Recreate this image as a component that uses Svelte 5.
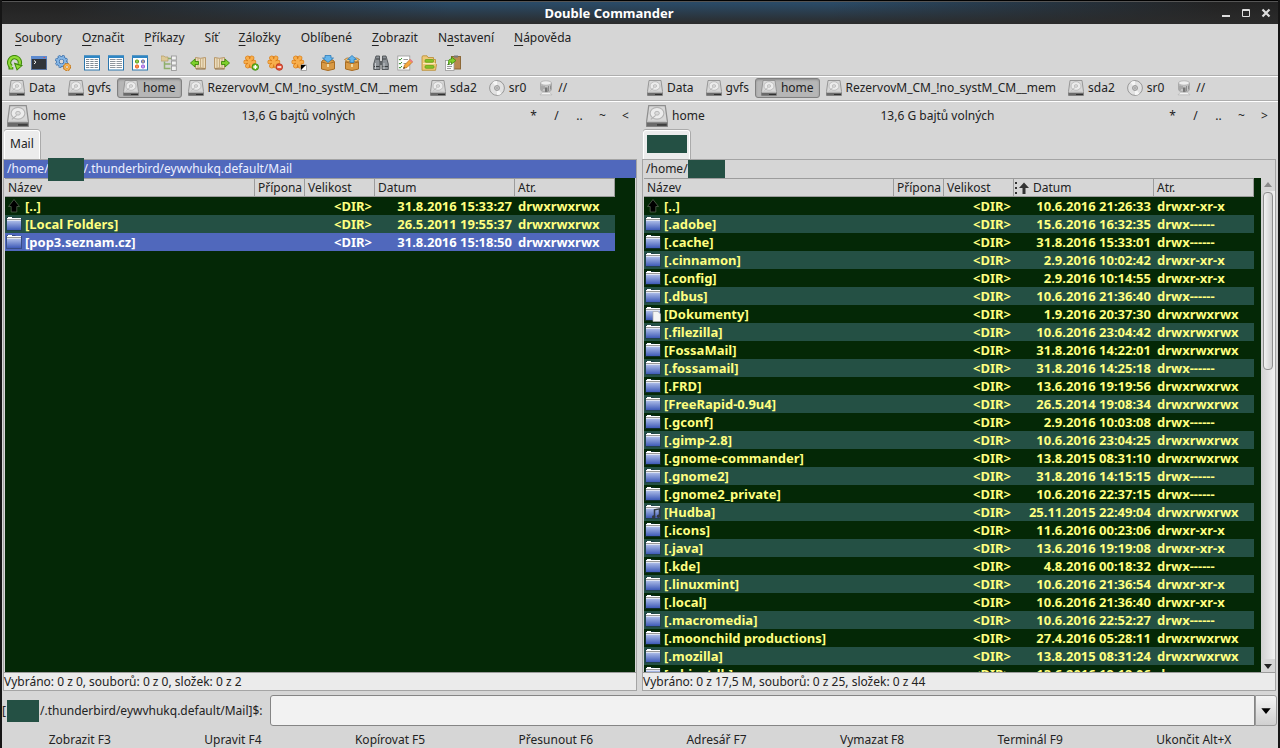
<script lang="ts">
  type Entry = { name: string; date: string; attr: string; kind?: string };

  const menu = [
    ['', 'S', 'oubory'],
    ['', 'O', 'značit'],
    ['', 'P', 'říkazy'],
    ['Síť', '', ''],
    ['', 'Z', 'áložky'],
    ['Oblíbené', '', ''],
    ['', 'Z', 'obrazit'],
    ['N', 'a', 'stavení'],
    ['', 'N', 'ápověda'],
  ];

  const toolGroups = [
    ['refresh', 'terminal', 'settings'],
    ['brief', 'columns', 'thumbs'],
    ['tree'],
    ['back', 'forward'],
    ['select', 'unselect', 'invert'],
    ['pack', 'unpack'],
    ['search', 'rename', 'sync', 'copynames'],
  ];

  const drives = [
    { name: 'Data', icon: 'disk' },
    { name: 'gvfs', icon: 'disk' },
    { name: 'home', icon: 'disk' },
    { name: 'RezervovM_CM_!no_systM_CM__mem', icon: 'disk' },
    { name: 'sda2', icon: 'disk' },
    { name: 'sr0', icon: 'cd' },
    { name: '//', icon: 'network' },
  ];

  const fkeys = [
    'Zobrazit F3', 'Upravit F4', 'Kopírovat F5', 'Přesunout F6',
    'Adresář F7', 'Vymazat F8', 'Terminál F9', 'Ukončit Alt+X',
  ];

  const full = 'drwxrwxrwx';
  const read = 'drwxr-xr-x';
  const priv = 'drwx------';

  const leftFiles: Entry[] = [
    { name: '..', date: '31.8.2016 15:33:27', attr: full, kind: 'up' },
    { name: 'Local Folders', date: '26.5.2011 19:55:37', attr: full },
    { name: 'pop3.seznam.cz', date: '31.8.2016 15:18:50', attr: full },
  ];

  const rightFiles: Entry[] = [
    { name: '..', date: '10.6.2016 21:26:33', attr: read, kind: 'up' },
    { name: '.adobe', date: '15.6.2016 16:32:35', attr: priv },
    { name: '.cache', date: '31.8.2016 15:33:01', attr: priv },
    { name: '.cinnamon', date: '2.9.2016 10:02:42', attr: read },
    { name: '.config', date: '2.9.2016 10:14:55', attr: read },
    { name: '.dbus', date: '10.6.2016 21:36:40', attr: priv },
    { name: 'Dokumenty', date: '1.9.2016 20:37:30', attr: full, kind: 'documents' },
    { name: '.filezilla', date: '10.6.2016 23:04:42', attr: full },
    { name: 'FossaMail', date: '31.8.2016 14:22:01', attr: full },
    { name: '.fossamail', date: '31.8.2016 14:25:18', attr: priv },
    { name: '.FRD', date: '13.6.2016 19:19:56', attr: full },
    { name: 'FreeRapid-0.9u4', date: '26.5.2014 19:08:34', attr: full },
    { name: '.gconf', date: '2.9.2016 10:03:08', attr: priv },
    { name: '.gimp-2.8', date: '10.6.2016 23:04:25', attr: full },
    { name: '.gnome-commander', date: '13.8.2015 08:31:10', attr: full },
    { name: '.gnome2', date: '31.8.2016 14:15:15', attr: priv },
    { name: '.gnome2_private', date: '10.6.2016 22:37:15', attr: priv },
    { name: 'Hudba', date: '25.11.2015 22:49:04', attr: full, kind: 'music' },
    { name: '.icons', date: '11.6.2016 00:23:06', attr: read },
    { name: '.java', date: '13.6.2016 19:19:08', attr: read },
    { name: '.kde', date: '4.8.2016 00:18:32', attr: priv },
    { name: '.linuxmint', date: '10.6.2016 21:36:54', attr: read },
    { name: '.local', date: '10.6.2016 21:36:40', attr: read },
    { name: '.macromedia', date: '10.6.2016 22:52:27', attr: priv },
    { name: '.moonchild productions', date: '27.4.2016 05:28:11', attr: full },
    { name: '.mozilla', date: '13.8.2015 08:31:24', attr: full },
    { name: '.objectdb', date: '13.6.2016 19:19:06', attr: priv },
  ];

  let leftCursor = $state(2);
  let command = $state('');
</script>

{#snippet flower()}
  <g stroke="#dd8420" stroke-width="4.6" stroke-linecap="round">
    <path d="M4.500 3l4.500 8M9 3L4.500 11M2.700 7h8.300" />
  </g>
  <g stroke="#f7ae4c" stroke-width="3.2" stroke-linecap="round">
    <path d="M4.500 3l4.500 8M9 3L4.500 11M2.700 7h8.300" />
  </g>
  <path d="M6.700 1v3M3 5l2 .8M10.500 5l-2 .8M6.700 9.500v3.500M3 9l2-.8" stroke="#d87a18" />
{/snippet}

{#snippet book()}
  <path d="M2.500 2.500l5 .8 5-.8v11l-5-.6-5 .6z" fill="#ecdcbc" stroke="#b8986a" />
  <path d="M3 14h9.500" stroke="#8b6a3b" />
  <path d="M7.500 3.400v9.400M5 3v9.600M10 3v9.600" stroke="#c2a678" stroke-width=".9" />
{/snippet}

{#snippet box()}
  <path d="M1.500 7L3 5h10l1.500 2v7L8 15.500 1.500 14z" fill="#d99a45" stroke="#a86c22" />
  <path d="M1.500 7L8 8.500 14.500 7" fill="#e9b563" stroke="#a86c22" />
  <path d="M7 9v3h2V9z" fill="#f1d9a2" />
{/snippet}

{#snippet icon(name)}
  <svg class="icon" viewBox="0 0 16 16" aria-hidden="true">
    {#if name === 'refresh'}
      <path d="M4.300 11.800A5.360 5.360 0 1 1 12.600 9.200" fill="none" stroke="#3f8a0c" stroke-width="4.400" />
      <path d="M1.500 12h4.800v2.500H1.500zM6.800 7.500L16 10.200 9.800 15.800z" fill="#3f8a0c" />
      <path d="M4.300 11.800A5.360 5.360 0 1 1 12.600 9.200" fill="none" stroke="#92dc38" stroke-width="2.400" />
      <path d="M2.800 12h2.500v1.500H2.800zM8.500 9.500l5.500 1.500-3.700 3z" fill="#92dc38" />
    {:else if name === 'terminal'}
      <rect x=".5" y="1.5" width="15" height="13" fill="#30343a" stroke="#56719f" />
      <path d="M0 1h16v3H0z" fill="#5d8bd0" />
      <path d="M12.500 2H14v1h-1.500z" fill="#e0504a" />
      <path d="M3 5.500l2 1.700L3 9" fill="none" stroke="#fff" />
    {:else if name === 'settings'}
      <circle cx="6.500" cy="6.500" r="5.400" fill="none" stroke="#3a6fab" stroke-width="2.200" stroke-dasharray="2.540 1.700" />
      <circle cx="6.500" cy="6.500" r="3.700" fill="none" stroke="#3a6fab" stroke-width="3.600" />
      <circle cx="6.500" cy="6.500" r="5.200" fill="none" stroke="#85b5e4" stroke-width="1.400" stroke-dasharray="1.600 2.480" stroke-dashoffset="-.5" />
      <circle cx="6.500" cy="6.500" r="3.700" fill="none" stroke="#85b5e4" stroke-width="2.200" />
      <circle cx="12" cy="12" r="3.300" fill="none" stroke="#c97a18" stroke-width="1.500" stroke-dasharray="1.500 1.100" />
      <circle cx="12" cy="12" r="2.300" fill="#e0e0e0" stroke="#c97a18" stroke-width="2.400" />
      <circle cx="12" cy="12" r="2.200" fill="none" stroke="#fbb95a" stroke-width="1.400" />
    {:else if name === 'brief' || name === 'columns'}
      <rect x=".5" y="1" width="15" height="14" fill="#fff" stroke="#2b76ad" />
      <path d="M0 .5h16V3H0z" fill="#2f86c4" />
      {#if name === 'brief'}
        <path d="M2 4.500h12M2 6.500h12M2 8.500h12M2 10.500h12M2 12.500h12" stroke="#7f8a94" stroke-dasharray="3.300 1" />
      {:else}
        <path d="M2 4.500h12M2 6.500h12M2 8.500h12M2 10.500h12M2 12.500h12" stroke="#8e969e" stroke-dasharray="5.500 1" />
      {/if}
    {:else if name === 'thumbs'}
      <rect x=".5" y="1" width="15" height="14" fill="#fff" stroke="#2b76ad" />
      <path d="M0 .5h16V3H0z" fill="#2f86c4" />
      <rect x="3.500" y="5" width="3" height="3" rx="1" fill="#9ad24c" stroke="#5a9b21" />
      <rect x="9.500" y="5" width="3" height="3" rx="1" fill="#c9a98a" stroke="#5f6fb4" />
      <rect x="3.500" y="10" width="3" height="3" rx="1" fill="#ff9452" stroke="#e8602a" />
      <rect x="9.500" y="10" width="3" height="3" rx="1" fill="#c99bf0" stroke="#9a62dc" />
    {:else if name === 'tree'}
      <path d="M0 1h3l1 1h3v4H0z" fill="#ddca98" stroke="#b39b64" stroke-width=".7" />
      <path d="M3.500 6.500v7h6M3.500 9h6" fill="none" stroke="#8fae6b" stroke-width="1.500" />
      <path d="M7 3.500h3" stroke="#8fae6b" stroke-width="1.500" />
      <g fill="#f2f2f2" stroke="#999" stroke-width=".9">
        <rect x="10.500" y="1" width="4.800" height="4" /><rect x="10.500" y="6" width="4.800" height="4" />
        <rect x="10.500" y="11" width="4.800" height="4.500" />
      </g>
    {:else if name === 'back'}
      <g transform="translate(3 0)">{@render book()}</g>
      <path d="M.500 8L5 4v2.500h3.500v3H5V12z" fill="#7ed02a" stroke="#3f8a0c" stroke-width=".9" />
    {:else if name === 'forward'}
      <g transform="translate(-2 0)">{@render book()}</g>
      <path d="M15.500 8L11 4v2.500H7.500v3H11V12z" fill="#7ed02a" stroke="#3f8a0c" stroke-width=".9" />
    {:else if name === 'select'}
      {@render flower()}
      <circle cx="12.300" cy="12" r="3.300" fill="#6cc024" stroke="#37840f" stroke-width=".8" />
      <path d="M10.300 12h4M12.300 10v4" stroke="#fff" stroke-width="1.400" />
    {:else if name === 'unselect'}
      {@render flower()}
      <circle cx="12.300" cy="12" r="3.300" fill="#e4573d" stroke="#b52e1c" stroke-width=".8" />
      <path d="M10.300 12h4" stroke="#fff" stroke-width="1.500" />
    {:else if name === 'invert'}
      {@render flower()}
      <rect x="10" y="10" width="5.500" height="5.500" fill="#fff" stroke="#888" stroke-width=".7" />
      <path d="M10 15V10h5z" fill="#000" />
    {:else if name === 'pack'}
      {@render box()}
      <path d="M5 .500h6V3h2.500L8 7.500 2.500 3H5z" fill="#65b5ec" stroke="#2c7cba" stroke-width=".8" />
    {:else if name === 'unpack'}
      {@render box()}
      <path d="M.500 4.500L4 7 8 5l4 2 3.500-2.500L13 3H3z" fill="#efc57c" stroke="#a86c22" stroke-width=".7" />
      <path d="M8 .500L12.500 4.500H10V7.500H6V4.500H3.500z" fill="#65b5ec" stroke="#2c7cba" stroke-width=".8" />
    {:else if name === 'search'}
      <path d="M3 1h3.500v4L7 8v6.500H.700V9zM13 1H9.500v4L9 8v6.500h6.300V9z" fill="#8d9297" stroke="#4c5054" stroke-width=".9" />
      <path d="M7 6h2v4H7z" fill="#5c6064" />
      <path d="M1 11.500h5.500M9.500 11.500H15M3 4h3.500M9.500 4H13" stroke="#3c4043" />
      <path d="M2.500 8v6M11 8v6" stroke="#c6cacd" />
    {:else if name === 'rename'}
      <rect x=".8" y="1" width="12" height="14" fill="#fff" stroke="#999" stroke-width=".8" />
      <path d="M2 4l1 1.200L5 3M2 8l1 1.200L5 7M2 12l1 1.200L5 11" fill="none" stroke="#388e2c" />
      <path d="M6.500 4.500h4.500M6.500 8.500H9" stroke="#999" />
      <path d="M6.500 13.500l1-3.500L13 4.500l2.500 2.500-5.500 5.500z" fill="#f5a83c" stroke="#b56b17" stroke-width=".7" />
      <path d="M12.200 5.200L13.500 4 16 6.500l-1.300 1.200z" fill="#e87c83" />
      <path d="M6.300 13.700l.6-1.800 1.200 1.200z" fill="#222" />
    {:else if name === 'sync'}
      <path d="M1 1.500L2 .8h4l1 1.700h5.500v2h2v4l1 1-1 5.800H1z" fill="#edc877" stroke="#b98a30" stroke-width=".8" />
      <path d="M2 8.500h12.500" stroke="#fbe9b6" />
      <rect x="4" y="4.500" width="8.500" height="2.800" rx="1" fill="#84c225" stroke="#619b16" stroke-width=".7" />
      <rect x="4" y="10.500" width="9" height="2.800" rx="1" fill="#84c225" stroke="#619b16" stroke-width=".7" />
    {:else if name === 'copynames'}
      <rect x="6.500" y="1.500" width="9" height="12.500" fill="#b98850" stroke="#86602f" stroke-width=".9" />
      <path d="M9 .5h4v2H9z" fill="#777" />
      <rect x=".5" y="5.500" width="8.500" height="10" fill="#fafafa" stroke="#999" stroke-width=".8" />
      <path d="M2 9.500h5M2 11.500h5M2 13.500h4" stroke="#999" />
      <path d="M3.500 10V6.500c0-1.500 1-2.500 3-2.500V2L11 5.500 6.500 9V7C5 7 4.500 8 3.500 10z" fill="#7ed02a" stroke="#3f8a0c" stroke-width=".8" />
    {:else if name === 'disk'}
      <path d="M2 .5h12l1.500 11v4H.5v-4z" fill="#d8d8d8" stroke="#8f8f8f" stroke-width=".9" />
      <path d="M.5 12.500h15v3H.5z" fill="#6a6a6a" />
      <path d="M.7 12h14.600" stroke="#c4c4c4" />
      <ellipse cx="8" cy="6" rx="5" ry="4.300" fill="#ececec" stroke="#b4b4b4" stroke-width=".8" />
      <ellipse cx="8" cy="6" rx="1.700" ry="1.400" fill="#dadada" stroke="#b0b0b0" stroke-width=".6" />
      <path d="M3.500 10.500l3.500-3" stroke="#b0b0b0" stroke-width=".8" />
      <path d="M8 14.500h7" stroke="#303030" />
    {:else if name === 'cd'}
      <circle cx="8" cy="8" r="7.400" fill="#e2e2e2" stroke="#8f8f8f" stroke-width=".9" />
      <path d="M8 8L3.500 2.200A7 7 0 0 1 8 .9zM8 8l4.500 5.800A7 7 0 0 1 8 15.100z" fill="#f6f6f6" />
      <circle cx="8" cy="8" r="2.500" fill="#cfcfcf" stroke="#8a8a8a" stroke-width=".8" />
      <circle cx="8" cy="8" r=".9" fill="#fff" stroke="#777" stroke-width=".6" />
    {:else if name === 'network'}
      <path d="M2.500 3v6.500c0 1.500 2.500 2.300 5.500 2.300s5.500-.8 5.500-2.300V3z" fill="#c4c4c4" stroke="#9a9a9a" stroke-width=".7" />
      <ellipse cx="8" cy="3" rx="5.500" ry="2.200" fill="#efefef" stroke="#a8a8a8" stroke-width=".7" />
      <path d="M4 5.500v5M6 6v3M10.500 6v5M12.500 5.500v4" stroke="#8c8c8c" />
      <path d="M7 7.500h2.500v5H7z" fill="#757575" />
      <path d="M2 14.800l2.500-2.500h7l2.500 2.500z" fill="#f2f2f2" stroke="#adadad" stroke-width=".6" />
    {:else if name === 'up'}
      <path d="M8 1.500l5.500 7h-2.700V14H5.200V8.500H2.500z" fill="#000" stroke="#53634e" stroke-width=".8" />
    {:else}
      <path d="M0 2.500L1 1h8l1 1h6v13H0z" fill="#1d3050" fill-opacity=".5" />
      <path d="M1 2h1V1h4v1h9v1H1z" fill="#fff" />
      <path d="M1 3h14v1H1z" fill="#999" />
      <path d="M1 4h14v1H1z" fill="#dfe4f2" />
      <path d="M1 5h14v9H1z" fill="url(#folder-blue)" />
      {#if name === 'documents'}
        <path d="M8 5.500h5L15.500 8v7.500H8z" fill="#f4f4f4" stroke="#aaa" stroke-width=".7" />
      {:else if name === 'music'}
        <path d="M9.500 13V5.800l5-1V12" fill="none" stroke="#333b40" stroke-width="1.500" />
        <circle cx="8.700" cy="13" r="1.800" fill="#333b40" /><circle cx="13.600" cy="12.300" r="1.800" fill="#333b40" />
      {/if}
    {/if}
  </svg>
{/snippet}

{#snippet driveBar()}
  <div class="drives">
    {#each drives as drive}
      <button class="drive" class:pressed={drive.name === 'home'}>
        {@render icon(drive.icon)}{drive.name}
      </button>
    {/each}
  </div>
{/snippet}

{#snippet panelHead(arrow)}
  <div class="head">
    <button class="current">{@render icon('disk')}home</button>
    <span class="free">13,6 G bajtů volných</span>
    {#each ['*', '/', '..', '~', arrow] as jump}
      <button class="jump">{jump}</button>
    {/each}
  </div>
{/snippet}

{#snippet fileTable(files, cursor, sorted)}
  <div class="scroller">
    <table>
      <colgroup>
        <col class="c-name" /><col class="c-ext" /><col class="c-size" /><col class="c-date" /><col class="c-attr" />
      </colgroup>
      <thead>
        <tr>
          <th>Název</th>
          <th>Přípona</th>
          <th>Velikost</th>
          <th class:sorted>
            {#if sorted}
              <svg class="sort" viewBox="0 0 16 14" aria-hidden="true">
                <path d="M1 1h2v2H1zM1 6h2v2H1zM1 11h2v2H1z" fill="#333" />
                <path d="M10 1.500l5 5.500h-3.500v6h-3V7H5z" fill="#333" />
              </svg>
            {/if}Datum
          </th>
          <th>Atr.</th>
        </tr>
      </thead>
      <tbody>
        {#each files as file, i}
          <tr class:cursor={i === cursor}>
            <td><span class="entry">{@render icon(file.kind ?? 'folder')}[{file.name}]</span></td>
            <td></td>
            <td class="num">&lt;DIR&gt;</td>
            <td class="num">{file.date}</td>
            <td>{file.attr}</td>
          </tr>
        {/each}
      </tbody>
    </table>
  </div>
{/snippet}

<div class="window">
  <svg class="defs" aria-hidden="true">
    <linearGradient id="folder-blue" x2="0" y2="1">
      <stop offset="0" stop-color="#a9b9e6" /><stop offset="1" stop-color="#3f5bb8" />
    </linearGradient>
  </svg>

  <header class="titlebar">
    <h1>Double Commander</h1>
    <div class="wm">
      <button aria-label="Minimalizovat"><svg viewBox="0 0 10 10"><path d="M1 8h8" stroke="#ddd" stroke-width="2" /></svg></button>
      <button aria-label="Maximalizovat"><svg viewBox="0 0 10 10"><path d="M1.500 1.500h7v7h-7zM1 2.500h8" fill="none" stroke="#ddd" /></svg></button>
      <button aria-label="Zavřít"><svg viewBox="0 0 10 10"><path d="M1.500 1.500l7 7M8.500 1.500l-7 7" stroke="#ddd" stroke-width="2.200" /></svg></button>
    </div>
  </header>

  <nav class="menu">
    {#each menu as [before, key, after]}
      <button>{before}{#if key}<u>{key}</u>{/if}{after}</button>
    {/each}
  </nav>

  <div class="toolbar">
    {#each toolGroups as group}
      <div class="group">
        {#each group as tool}
          <button aria-label={tool}>{@render icon(tool)}</button>
        {/each}
      </div>
    {/each}
  </div>

  <div class="drive-row">
    {@render driveBar()}
    {@render driveBar()}
  </div>

  <main>
    <section class="panel">
      {@render panelHead('<')}
      <div class="tabs"><button class="tab">Mail</button></div>
      <div class="frame">
        <div class="path active">/home/<span class="mask tall"></span>/.thunderbird/eywvhukq.default/Mail</div>
        <div class="list">{@render fileTable(leftFiles, leftCursor, false)}</div>
        <div class="status">Vybráno: 0 z 0, souborů: 0 z 0, složek: 0 z 2</div>
      </div>
    </section>

    <section class="panel">
      {@render panelHead('>')}
      <div class="tabs"><button class="tab masked" aria-label="home"><span class="mask wide"></span></button></div>
      <div class="frame">
        <div class="path">/home/<span class="mask"></span></div>
        <div class="list">
          {@render fileTable(rightFiles, -1, true)}
          <div class="scrollbar">
            <button class="arrow dim" aria-label="Nahoru"><svg viewBox="0 0 8 6"><path d="M4 0l4 5H0z" /></svg></button>
            <div class="track"><div class="thumb"></div></div>
            <button class="arrow" aria-label="Dolů"><svg viewBox="0 0 8 6"><path d="M4 6l4-5H0z" /></svg></button>
          </div>
        </div>
        <div class="status">Vybráno: 0 z 17,5 M, souborů: 0 z 25, složek: 0 z 44</div>
      </div>
    </section>
  </main>

  <div class="command">
    <label for="cmd">[<span class="mask user"></span>/.thunderbird/eywvhukq.default/Mail]$:</label>
    <input id="cmd" type="text" bind:value={command} />
    <button aria-label="Historie"><svg viewBox="0 0 8 6"><path d="M4 6l4-5H0z" /></svg></button>
  </div>

  <footer>
    {#each fkeys as key}
      <button>{key}</button>
    {/each}
  </footer>
</div>

<style>
  :global(body) { background: #111; }

  .window {
    display: flex; flex-direction: column;
    box-sizing: border-box; height: 100vh;
    border: solid #151515; border-width: 0 2px;
    background: #d6d6d6; color: #222;
    font: 12px/16px "Noto Sans", sans-serif;
    overflow: hidden;
  }
  .defs { position: absolute; width: 0; height: 0; }

  button {
    margin: 0; padding: 0; border: 0;
    background: none; color: inherit; font: inherit;
    white-space: nowrap;
  }
  .icon { width: 16px; height: 16px; flex: none; display: block; }

  .titlebar {
    display: flex; align-items: center;
    height: 24px; flex: none; margin: 0 -2px;
    background:
      linear-gradient(rgba(43, 43, 43, 0) 10%, #2b2b2b),
      linear-gradient(90deg, #232323 5%, #2a4a66 35%, #2a4a66 65%, #232323 95%);
    border-top: 1px solid #000; box-sizing: border-box;
    box-shadow: inset 0 1px #555;
  }
  h1 { flex: 1; margin: 0; padding-left: 48px; text-align: center; font-size: 13px; line-height: 18px; color: #fff; }
  .wm { display: flex; gap: 10px; padding: 0 9px 0 51px; }
  .wm button { width: 10px; height: 10px; }
  .wm svg { display: block; width: 10px; height: 10px; }

  .menu { display: flex; gap: 20px; flex: none; padding: 6px 13px 4px; }
  .menu u { text-underline-offset: 3px; }

  .toolbar { display: flex; gap: 5px; flex: none; padding: 5px 1px 4px; }
  .group { display: flex; }
  .group button { padding: 0 4px; }

  .drive-row {
    display: grid; grid-template-columns: 1fr 1fr; flex: none;
    padding: 1px 0; height: 22px;
    border: solid #aeaeae; border-width: 1px 0;
    box-shadow: inset 0 1px #fff, 0 1px #fff;
  }
  .drives { display: flex; min-width: 0; padding: 1px; }
  .drive {
    display: flex; align-items: center; gap: 4px;
    padding: 0 5px; border: 1px solid transparent; border-radius: 3px;
    height: 20px; box-sizing: border-box;
  }
  .drive.pressed { background: #b6b6b6; border-color: #808080; box-shadow: inset 0 1px 2px #8c8c8c; }

  main { flex: 1; min-height: 0; display: grid; grid-template-columns: 1fr 1fr; gap: 2px; }
  .panel { display: flex; flex-direction: column; min-width: 0; min-height: 0; padding: 0 2px 0 1px; }

  .head { display: flex; align-items: center; height: 29px; flex: none; }
  .current { display: flex; align-items: center; gap: 4px; width: 72px; padding-left: 4px; }
  .current :global(.icon) { width: 22px; height: 22px; }
  .free { flex: 1; text-align: center; }
  .jump { width: 23px; }

  .tabs { display: flex; flex: none; height: 29px; padding-left: 1px; }
  .tab {
    padding: 0 5px 2px; border: 1px solid #fff; border-bottom: 0;
    border-radius: 3px 3px 0 0; background: #ececec;
    box-shadow: 0 -1px #aaa, 1px 0 #aaa;
  }
  .tab.masked { padding: 0 2px 2px 3px; }

  .frame {
    flex: 1; min-height: 0; display: flex; flex-direction: column;
    border: 1px solid #a4a4a4;
  }
  .path { display: flex; align-items: center; height: 18px; flex: none; padding: 0 3px; }
  .path.active { background: #5068bc; color: #eef0ff; }
  .mask { display: inline-block; width: 37px; height: 18px; background: #245044; }
  .mask.tall { width: 36px; height: 23px; margin-left: -1px; position: relative; }
  .mask.wide { width: 40px; display: block; }
  .mask.user { width: 32px; height: 22px; margin: 0 1px; }

  .list { flex: 1; min-height: 0; display: flex; margin: 0 1px; background: #042806; }
  .scroller { flex: 1; min-width: 0; overflow: hidden; }
  table { width: 610px; table-layout: fixed; border-collapse: separate; border-spacing: 0; }
  .c-name { width: 250px; }
  .c-ext { width: 50px; }
  .c-size { width: 70px; }
  .c-date { width: 140px; }
  .c-attr { width: 100px; }
  th {
    height: 19px; box-sizing: border-box; padding: 0 3px;
    background: #d6d6d6; border: solid #9c9c9c; border-width: 1px 1px 1px 0;
    font-weight: normal; text-align: left; line-height: 16px; white-space: nowrap;
  }
  .sorted { padding-left: 0; }
  .sort { width: 16px; height: 14px; margin: 0 3px 0 0; vertical-align: -3px; }
  td { height: 18px; padding: 0 3px; font-size: 13px; font-weight: bold; line-height: 18px; white-space: nowrap; color: #ffff80; }
  td:first-child { padding-left: 1px; }
  .entry { display: flex; align-items: center; gap: 3px; height: 18px; }
  .num { text-align: right; }
  tbody tr:nth-child(even) { background: #245044; }
  tbody tr.cursor { background: #5068bc; }
  tr.cursor td { color: #fff; }

  .scrollbar { width: 14px; flex: none; display: flex; flex-direction: column; margin-right: -1px; background: #d6d6d6; }
  .arrow { height: 13px; display: grid; place-items: center; }
  .arrow svg { width: 8px; height: 6px; display: block; fill: #222; }
  .arrow.dim svg { fill: #8a8a8a; }
  .track { flex: 1; background: linear-gradient(90deg, #d0d0d0, #f2f2f2); }
  .thumb {
    height: 38%; box-sizing: border-box; margin: 1px 2px;
    border: 1px solid #8f8f8f; border-radius: 4px;
    background: linear-gradient(90deg, #f2f2f2, #cfcfcf);
  }

  .status { flex: none; height: 17px; line-height: 17px; background: #ebebeb; border-top: 1px solid #9c9c9c; }

  .command { display: flex; align-items: center; flex: none; margin-top: 4px; padding-right: 1px; }
  label { display: flex; align-items: center; padding-right: 7px; white-space: nowrap; }
  .command input {
    flex: 1; min-width: 0; height: 31px; box-sizing: border-box; padding: 0 6px;
    border: 1px solid #858585; border-radius: 3px 0 0 3px;
    background: #f2f2f2; font: inherit; outline: 0;
  }
  .command button {
    width: 22px; height: 31px; display: grid; place-items: center;
    border: 1px solid #9a9a9a; border-radius: 0 3px 3px 0;
    background: linear-gradient(#f4f4f4, #d0d0d0);
  }
  .command svg { width: 10px; height: 7px; }

  footer { display: flex; flex: none; padding-top: 6px; }
  footer button { flex: 1 1 auto; }
</style>
